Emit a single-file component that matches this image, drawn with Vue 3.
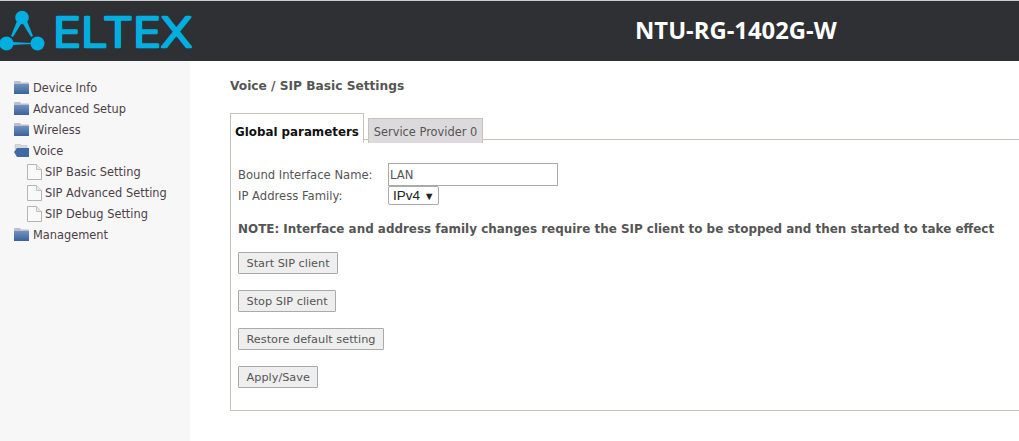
<script setup>
const menu = [
  { label: 'Device Info', type: 'folder' },
  { label: 'Advanced Setup', type: 'folder' },
  { label: 'Wireless', type: 'folder' },
  { label: 'Voice', type: 'open' },
  { label: 'SIP Basic Setting', type: 'doc' },
  { label: 'SIP Advanced Setting', type: 'doc' },
  { label: 'SIP Debug Setting', type: 'doc' },
  { label: 'Management', type: 'folder' },
]
const actions = ['Start SIP client', 'Stop SIP client', 'Restore default setting', 'Apply/Save']
</script>

<template>
  <div class="page">
    <header class="header">
      <svg class="logo" width="200" height="60" viewBox="0 0 200 60">
        <g fill="#00aee0">
          <circle cx="22" cy="16.5" r="6.8" />
          <circle cx="6.5" cy="42.5" r="7" />
          <circle cx="37.5" cy="42.5" r="7" />
          <path d="M17 20 L11 35 L13 36 L21 23 Z" />
          <path d="M27 20 L33 35 L31 36 L23 23 Z" />
          <path d="M12 41 L32 42 L32 43 L12 44 Z" />
        </g>
        <text x="53" y="46" class="logo-text" textLength="139" lengthAdjust="spacingAndGlyphs">ELTEX</text>
      </svg>
      <div class="product">NTU-RG-1402G-W</div>
    </header>
    <div class="body">
      <nav class="side">
        <div v-for="item in menu" :key="item.label" class="item" :class="{ sub: item.type === 'doc' }">
          <svg v-if="item.type === 'folder'" width="15" height="13" viewBox="0 0 15 13" class="ic">
            <defs>
              <linearGradient id="fld" x1="0" y1="0" x2="0" y2="1">
                <stop offset="0" stop-color="#6f93c4" />
                <stop offset="1" stop-color="#3a6298" />
              </linearGradient>
            </defs>
            <path d="M0 1 Q0 0 1 0 H6 L7 1.5 H14 Q15 1.5 15 2.5 V13 H0 Z" fill="#b9c0ca" />
            <rect x="0" y="3" width="15" height="10" fill="url(#fld)" />
          </svg>
          <svg v-else-if="item.type === 'open'" width="15" height="13" viewBox="0 0 15 13" class="ic">
            <path d="M1 5 V1 Q1 0 2 0 H6 L7 1.5 H13 V5 Z" fill="#d6d8dc" stroke="#b5b8bd" stroke-width=".5" />
            <path d="M0 8 L3 4 H15 V13 H3 Z" fill="#3f6aa6" />
          </svg>
          <svg v-else width="15" height="16" viewBox="0 0 15 16" class="ic">
            <path d="M.5 .5 H9.5 L14.5 5.5 V15.5 H.5 Z" fill="#f9f9f9" stroke="#b4b4b4" />
            <path d="M9.5 .5 V5.5 H14.5" fill="#e8e8e8" stroke="#c0c0c0" />
          </svg>
          <span>{{ item.label }}</span>
        </div>
      </nav>
      <main class="main">
        <h1 class="title">Voice / SIP Basic Settings</h1>
        <div class="tabs">
          <div class="tab active">Global parameters</div>
          <div class="tab">Service Provider 0</div>
        </div>
        <section class="panel">
          <div class="form">
            <label>Bound Interface Name:</label>
            <input class="input" value="LAN" />
            <label>IP Address Family:</label>
            <div class="select">IPv4 <span class="arrow">▼</span></div>
          </div>
          <p class="note">NOTE: Interface and address family changes require the SIP client to be stopped and then started to take effect</p>
          <div class="actions">
            <button v-for="a in actions" :key="a" class="btn">{{ a }}</button>
          </div>
        </section>
      </main>
    </div>
  </div>
</template>

<style>
html, body { margin: 0; background: #fff; overflow: hidden; }
</style>

<style scoped>
.page { width: 1019px; height: 441px; overflow: hidden; font-family: "DejaVu Sans", sans-serif; font-size: 11.4px; color: #555; }
.header { height: 60px; border-top: 1px solid #ccc; background: #2e3033; display: flex; align-items: center; box-sizing: content-box; }
.logo { flex: none; width: 200px; height: 60px; }
.logo-text { font-family: "Inter", sans-serif; font-size: 41px; font-weight: 300; fill: #00aee0; stroke: #00aee0; stroke-width: 2.5px; stroke-linejoin: round; }
.product { margin-left: 435px; margin-top: -2px; font-family: "Open Sans", sans-serif; font-weight: 700; font-size: 23.8px; color: #fff; }
.body { display: flex; height: 380px; }
.side { width: 190px; background: #f7f7f7; padding-top: 16px; box-sizing: border-box; flex: none; }
.item { height: 21px; display: flex; align-items: center; padding-left: 14px; color: #4d3f4a; gap: 4px; }
.item.sub { padding-left: 27px; gap: 3px; }
.ic { flex: none; }
.main { flex: 1; min-width: 0; padding-left: 40px; }
.title { margin: 16px 0 0; font-size: 12.2px; line-height: 18px; font-weight: 700; color: #555; }
.tabs { display: flex; align-items: flex-start; gap: 4px; margin-top: 18px; position: relative; z-index: 1; height: 26px; }
.tab { height: 25px; line-height: 26px; margin-top: 5px; width: 115px; box-sizing: border-box; text-align: center; white-space: nowrap; background: #dcdadc; border: 1px solid #c6c3bc; border-bottom: 0; color: #555; }
.tab.active { height: 30px; line-height: 36px; margin-top: 0; width: 134px; padding-left: 4px; text-align: left; background: #fff; color: #111; font-weight: 700; font-size: 11.85px; }
.panel { height: 272px; border: 1px solid #c6c3bc; border-right: 0; box-sizing: border-box; padding: 23px 7px 0; width: 789px; }
.form { display: grid; grid-template-columns: 150px 170px; grid-template-rows: 23px 19px; align-items: center; font-size: 11.6px; }
.input { width: 170px; height: 23px; box-sizing: border-box; border: 1px solid #aaa; padding: 0 1px; font: 11.6px "DejaVu Sans", sans-serif; color: #555; outline: 0; }
.select { width: 51px; height: 19px; box-sizing: border-box; border: 1px solid #aaa; border-radius: 2px; padding-left: 4px; line-height: 17px; color: #222; font-family: "Liberation Sans", sans-serif; font-size: 13.5px; white-space: nowrap; }
.arrow { font-size: 11px; }
.note { margin: 15px 0 0; font-size: 11.95px; line-height: 18px; font-weight: 700; color: #555; white-space: nowrap; }
.actions { margin-top: 14px; display: flex; flex-direction: column; align-items: flex-start; gap: 16px; }
.btn { height: 22px; padding: 0 7.5px; box-sizing: border-box; border: 1px solid #aaa; background: #eee; color: #555; font: 11.3px "DejaVu Sans", sans-serif; border-radius: 1px; }
</style>
